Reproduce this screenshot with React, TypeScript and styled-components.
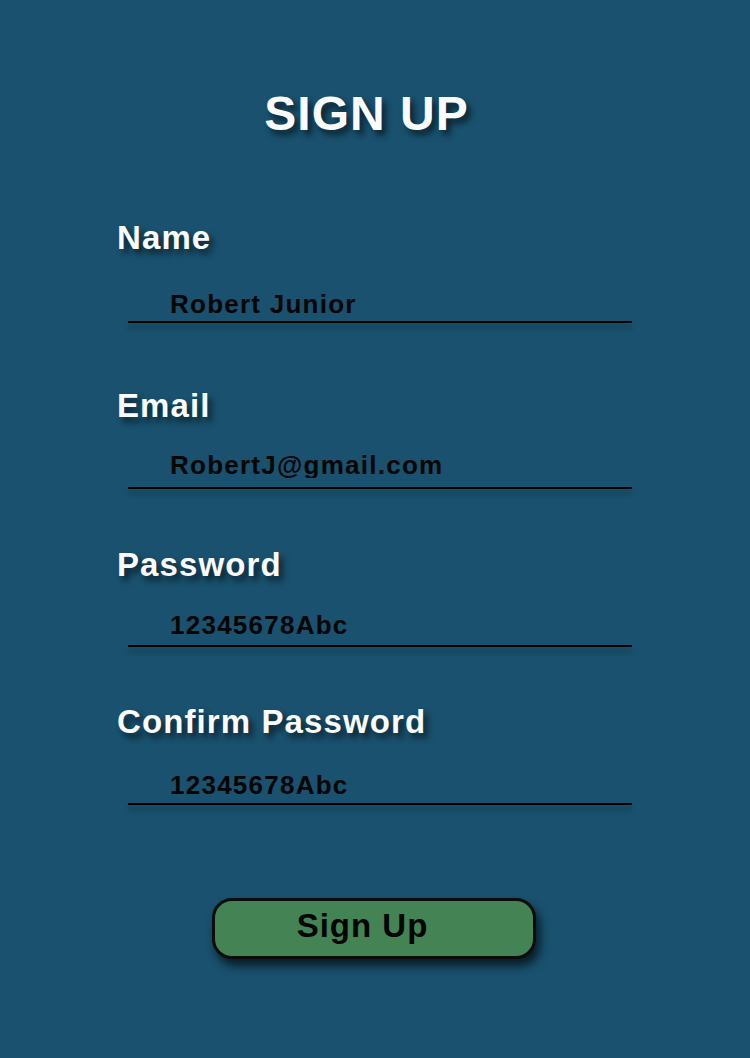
import React from "react";
import styled, { createGlobalStyle } from "styled-components";

const GlobalStyle = createGlobalStyle`
  html, body {
    margin: 0;
    padding: 0;
    background: #19516e;
  }
  body {
    font-family: "Liberation Sans", Arial, Helvetica, sans-serif;
  }
  * { box-sizing: border-box; }
`;

const Page = styled.main`
  min-height: 1058px;
  width: 750px;
  background: #19516e;
  padding-top: 90px;
  display: flex;
  flex-direction: column;
`;

const Title = styled.h1`
  margin: 0;
  padding-right: 17px;
  text-align: center;
  font-size: 48px;
  line-height: 1;
  font-weight: 700;
  letter-spacing: 1px;
  color: #fbfbfb;
  text-shadow: 4px 5px 6px rgba(0, 0, 0, 0.6);
`;

const Form = styled.form`
  display: flex;
  flex-direction: column;
`;

const Field = styled.div<{ $top: number }>`
  display: flex;
  flex-direction: column;
  margin-top: ${(p) => p.$top}px;
  padding-left: 117px;
`;

const Label = styled.label<{ $gap: number }>`
  display: block;
  font-size: 33px;
  line-height: 1;
  font-weight: 700;
  letter-spacing: 1.1px;
  color: #fbfbfb;
  text-shadow: 4px 5px 6px rgba(0, 0, 0, 0.6);
  margin-bottom: ${(p) => p.$gap}px;
`;

const InputWrap = styled.div<{ $gap: number }>`
  margin-left: 11px;
  width: 504px;
  display: flex;
  flex-direction: column;
  gap: ${(p) => p.$gap}px;
`;

const Input = styled.input`
  display: block;
  width: 100%;
  height: 26px;
  margin: 0;
  padding: 0 0 0 42px;
  border: none;
  outline: none;
  background: transparent;
  font-family: "Liberation Sans", Arial, Helvetica, sans-serif;
  font-size: 26px;
  line-height: 26px;
  font-weight: 700;
  letter-spacing: 1.25px;
  color: #050505;
`;

const Underline = styled.div`
  height: 2px;
  width: 100%;
  background: #000;
  box-shadow: 0 5px 5px rgba(0, 0, 0, 0.3);
`;

const Submit = styled.button`
  margin: 93px 0 0 212px;
  width: 324px;
  height: 61px;
  padding: 0 23px 7px 0;
  display: flex;
  align-items: center;
  justify-content: center;
  background: #438354;
  border: 3px solid #0d0d0d;
  border-radius: 20px;
  box-shadow: 4px 7px 10px rgba(0, 0, 0, 0.65);
  font-family: "Liberation Sans", Arial, Helvetica, sans-serif;
  font-size: 33px;
  line-height: 1;
  font-weight: 700;
  letter-spacing: 1px;
  color: #050505;
  cursor: pointer;
`;

type FieldDef = {
  id: string;
  label: string;
  value: string;
  type: string;
  top: number;
  labelGap: number;
  lineGap: number;
};

const fields: FieldDef[] = [
  { id: "name", label: "Name", value: "Robert Junior", type: "text", top: 83, labelGap: 37, lineGap: 4 },
  { id: "email", label: "Email", value: "RobertJ@gmail.com", type: "text", top: 66, labelGap: 30, lineGap: 9 },
  { id: "password", label: "Password", value: "12345678Abc", type: "text", top: 59, labelGap: 31, lineGap: 7 },
  { id: "confirm", label: "Confirm Password", value: "12345678Abc", type: "text", top: 58, labelGap: 34, lineGap: 5 },
];

export default function App() {
  return (
    <>
      <GlobalStyle />
      <Page>
        <Title>SIGN UP</Title>
        <Form onSubmit={(e) => e.preventDefault()}>
          {fields.map((f) => (
            <Field key={f.id} $top={f.top}>
              <Label htmlFor={f.id} $gap={f.labelGap}>
                {f.label}
              </Label>
              <InputWrap $gap={f.lineGap}>
                <Input id={f.id} type={f.type} defaultValue={f.value} />
                <Underline />
              </InputWrap>
            </Field>
          ))}
          <Submit type="submit">Sign Up</Submit>
        </Form>
      </Page>
    </>
  );
}
